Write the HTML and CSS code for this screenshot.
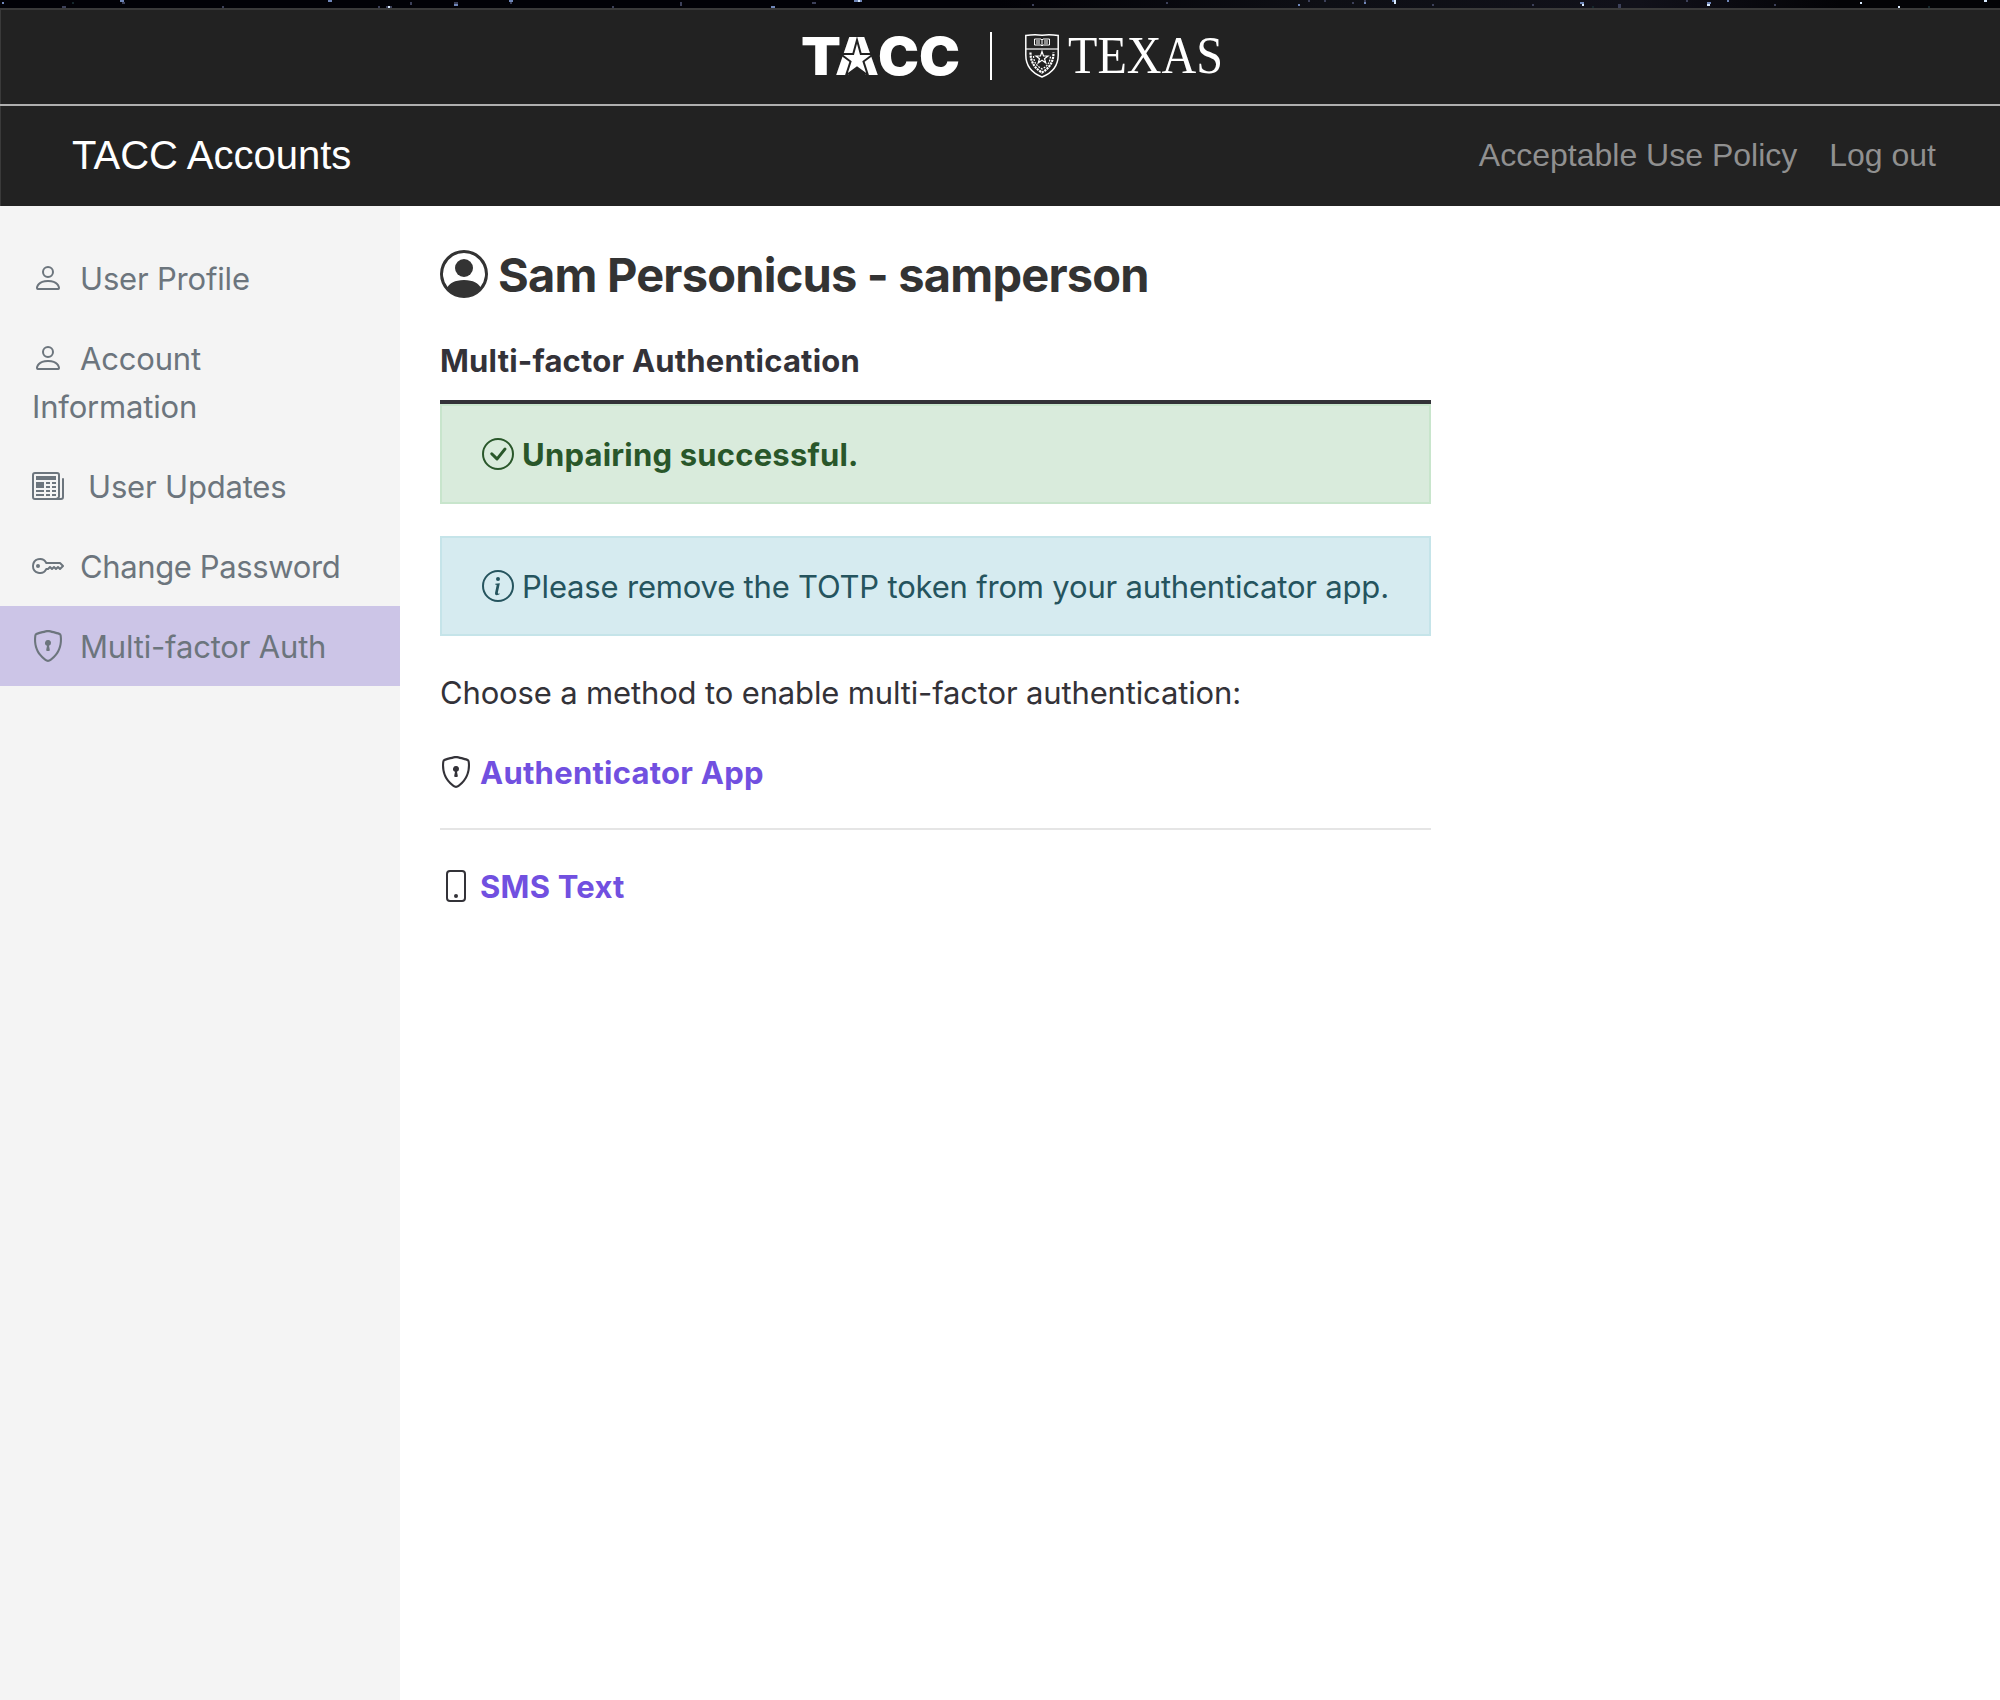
FILE: index.html
```html
<!DOCTYPE html>
<html lang="en">
<head>
<meta charset="utf-8">
<title>TACC Accounts</title>
<link rel="stylesheet" href="styles.css">
</head>
<body>
<svg width="0" height="0" class="defs" aria-hidden="true">
  <symbol id="person" viewBox="0 0 16 16"><path d="M8 8a3 3 0 1 0 0-6 3 3 0 0 0 0 6zm2-3a2 2 0 1 1-4 0 2 2 0 0 1 4 0zm4 8c0 1-1 1-1 1H3s-1 0-1-1 1-4 6-4 6 3 6 4zm-1-.004c-.001-.246-.154-.986-.832-1.664C11.516 10.68 10.289 10 8 10c-2.29 0-3.516.68-4.168 1.332-.678.678-.83 1.418-.832 1.664h10z"/></symbol>
  <symbol id="newspaper" viewBox="0 0 16 16"><path d="M0 2.5A1.5 1.5 0 0 1 1.5 1h11A1.5 1.5 0 0 1 14 2.5v10.528c0 .3-.05.654-.238.972h.738a.5.5 0 0 0 .5-.5v-9a.5.5 0 0 1 1 0v9a1.5 1.5 0 0 1-1.5 1.5H1.497A1.497 1.497 0 0 1 0 13.5v-11zM12 14c.37 0 .654-.211.853-.441.092-.106.147-.279.147-.531V2.5a.5.5 0 0 0-.5-.5h-11a.5.5 0 0 0-.5.5v11c0 .278.223.5.497.5H12z"/><path d="M2 3h10v2H2V3zm0 3h4v3H2V6zm0 4h4v1H2v-1zm0 2h4v1H2v-1zm5-6h2v1H7V6zm3 0h2v1h-2V6zM7 8h2v1H7V8zm3 0h2v1h-2V8zm-3 2h2v1H7v-1zm3 0h2v1h-2v-1zm-3 2h2v1H7v-1zm3 0h2v1h-2v-1z"/></symbol>
  <symbol id="key" viewBox="0 0 16 16"><path d="M0 8a4 4 0 0 1 7.465-2H14a.5.5 0 0 1 .354.146l1.5 1.5a.5.5 0 0 1 0 .708l-1.5 1.5a.5.5 0 0 1-.708 0L13 9.207l-.646.647a.5.5 0 0 1-.708 0L11 9.207l-.646.647a.5.5 0 0 1-.708 0L9 9.207l-.646.647A.5.5 0 0 1 8 10h-.535A4 4 0 0 1 0 8zm4-3a3 3 0 1 0 2.712 4.285A.5.5 0 0 1 7.163 9h.63l.853-.854a.5.5 0 0 1 .708 0l.646.647.646-.647a.5.5 0 0 1 .708 0l.646.647.646-.647a.5.5 0 0 1 .708 0l.646.647.793-.793-1-1h-6.63a.5.5 0 0 1-.451-.285A3 3 0 0 0 4 5z"/><path d="M4 8a1 1 0 1 1-2 0 1 1 0 0 1 2 0z"/></symbol>
  <symbol id="shield-lock" viewBox="0 0 16 16"><path d="M5.338 1.59a61.44 61.44 0 0 0-2.837.856.481.481 0 0 0-.328.39c-.554 4.157.726 7.19 2.253 9.188a10.725 10.725 0 0 0 2.287 2.233c.346.244.652.42.893.533.12.057.218.095.293.118a.55.55 0 0 0 .101.025.615.615 0 0 0 .1-.025c.076-.023.174-.061.294-.118.24-.113.547-.29.893-.533a10.726 10.726 0 0 0 2.287-2.233c1.527-1.997 2.807-5.031 2.253-9.188a.48.48 0 0 0-.328-.39c-.651-.213-1.75-.56-2.837-.855C9.552 1.29 8.531 1.067 8 1.067c-.53 0-1.552.223-2.662.524zM5.072.56C6.157.265 7.31 0 8 0s1.843.265 2.928.56c1.11.3 2.229.655 2.887.87a1.54 1.54 0 0 1 1.044 1.262c.596 4.477-.787 7.795-2.465 9.99a11.775 11.775 0 0 1-2.517 2.453 7.159 7.159 0 0 1-1.048.625c-.28.132-.581.24-.829.24s-.548-.108-.829-.24a7.158 7.158 0 0 1-1.048-.625 11.777 11.777 0 0 1-2.517-2.453C1.928 10.487.545 7.169 1.141 2.692A1.54 1.54 0 0 1 2.185 1.43 62.456 62.456 0 0 1 5.072.56z"/><path d="M9.5 6.5a1.5 1.5 0 0 1-1 1.415l.385 1.99a.5.5 0 0 1-.491.595h-.788a.5.5 0 0 1-.49-.595l.384-1.99a1.5 1.5 0 1 1 2-1.415z"/></symbol>
  <symbol id="person-circle" viewBox="0 0 16 16"><path d="M11 6a3 3 0 1 1-6 0 3 3 0 0 1 6 0z"/><path fill-rule="evenodd" d="M0 8a8 8 0 1 1 16 0A8 8 0 0 1 0 8zm8-7a7 7 0 0 0-5.468 11.37C3.242 11.226 4.805 10 8 10s4.757 1.225 5.468 2.37A7 7 0 0 0 8 1z"/></symbol>
  <symbol id="check-circle" viewBox="0 0 16 16"><path d="M8 15A7 7 0 1 1 8 1a7 7 0 0 1 0 14zm0 1A8 8 0 1 0 8 0a8 8 0 0 0 0 16z"/><path d="M10.97 4.97a.235.235 0 0 0-.02.022L7.477 9.417 5.384 7.323a.75.75 0 0 0-1.06 1.06L6.97 11.03a.75.75 0 0 0 1.079-.02l3.992-4.99a.75.75 0 0 0-1.071-1.05z"/></symbol>
  <symbol id="info-circle" viewBox="0 0 16 16"><path d="M8 15A7 7 0 1 1 8 1a7 7 0 0 1 0 14zm0 1A8 8 0 1 0 8 0a8 8 0 0 0 0 16z"/><path d="m8.93 6.588-2.29.287-.082.38.45.083c.294.07.352.176.288.469l-.738 3.468c-.194.897.105 1.319.808 1.319.545 0 1.178-.252 1.465-.598l.088-.416c-.2.176-.492.246-.686.246-.275 0-.375-.193-.304-.533L8.93 6.588zM9 4.5a1 1 0 1 1-2 0 1 1 0 0 1 2 0z"/></symbol>
  <symbol id="phone" viewBox="0 0 16 16"><path d="M11 1a1 1 0 0 1 1 1v12a1 1 0 0 1-1 1H5a1 1 0 0 1-1-1V2a1 1 0 0 1 1-1h6zM5 0a2 2 0 0 0-2 2v12a2 2 0 0 0 2 2h6a2 2 0 0 0 2-2V2a2 2 0 0 0-2-2H5z"/><path d="M8 14a1 1 0 1 0 0-2 1 1 0 0 0 0 2z"/></symbol>
</svg>

<svg class="night-sky" width="2000" height="8" viewBox="0 0 2000 8" shape-rendering="crispEdges">
  <path fill="#6f86b8" d="M2 2h2v2h-2zM120 0h4v2h-4zM328 0h4v2h-4zM454 4h4v2h-4zM509 0h4v2h-4zM771 6h4v2h-4zM854 0h8v2h-8zM1298 4h2v2h-2zM1364 2h2v2h-2zM1392 0h3v2h-3zM1580 2h4v2h-4zM1707 2h4v2h-4zM1727 0h2v2h-2z"/>
  <path fill="#3c4059" d="M62 6h4v2h-4zM122 2h3v2h-3zM222 6h2v2h-2zM378 6h2v2h-2zM386 6h6v2h-6zM410 2h2v3h-2zM454 2h4v2h-4zM510 2h2v2h-2zM612 6h2v2h-2zM680 2h2v4h-2zM812 2h4v2h-4zM1032 4h2v2h-2zM1166 2h2v2h-2zM1308 0h2v2h-2zM1324 0h2v2h-2zM1352 2h2v2h-2zM1364 0h2v2h-2zM1432 4h2v2h-2zM1532 4h2v2h-2zM1618 4h3v4h-3zM1686 0h2v2h-2zM1774 4h2v2h-2z"/>
  <path fill="#15272c" d="M72 2h2v2h-2zM1592 6h2v2h-2zM1928 6h2v2h-2z"/>
  <path fill="#d8eaff" d="M388 6h2v2h-2zM858 0h2v2h-2zM1394 0h2v4h-2zM1582 4h2v2h-2zM1707 4h3v2h-3zM1860 2h2v2h-2zM1898 6h2v2h-2zM1984 0h3v2h-3z"/>
</svg>

<header class="brand-bar">
  <a class="tacc-logo" href="#" aria-label="TACC">
    <svg width="160" height="46" viewBox="0 0 160 46">
      <g class="tacc-letters">
        <text x="0" y="41" textLength="40" lengthAdjust="spacingAndGlyphs">T</text>
        <text x="34" y="41" textLength="44" lengthAdjust="spacingAndGlyphs">A</text>
        <text x="77" y="41" textLength="41" lengthAdjust="spacingAndGlyphs">C</text>
        <text x="118" y="41" textLength="41" lengthAdjust="spacingAndGlyphs">C</text>
      </g>
      <path class="tacc-star" d="M56 6 59.800 20H72.500L62.500 27.500 67 41.500 56 33.500 45 41.500 49.500 27.500 39.500 20H52.200Z"/>
    </svg>
  </a>
  <span class="brand-rule"></span>
  <a class="texas-logo" href="#" aria-label="Texas">
    <svg width="34" height="44" viewBox="0 0 34 44" fill="none" stroke="#fff">
      <path stroke-width="1.500" d="M.8 1.500Q9 .3 17 1.200 25 .3 33.200 1.500V21C33.200 32 27 39 17 43 7 39 .8 32 .8 21Z"/>
      <path stroke-width="1.200" d="M1 15H33"/>
      <path stroke-width="1" d="M9.500 5H16L17 6 18 5H24.500V11H18L17 12 16 11H9.500ZM17 6V12M11 7H15M11 9H15M19 7H23M19 9H23"/>
      <path stroke-width="1.200" d="M17 17.500 18.500 22H23L19.500 24.700 20.800 29 17 26.300 13.200 29 14.500 24.700 11 22H15.500Z"/>
      <path stroke-width="2.200" stroke-dasharray="2.200 .8" d="M5.500 18.500Q5.500 32 17 38.500Q28.500 32 28.500 18.500"/>
      <path stroke-width="1.300" stroke-dasharray="1.800 1.200" d="M8.500 22Q9 31 17 35Q25 31 25.500 22"/>
    </svg>
    <svg width="157" height="44" viewBox="0 0 157 44"><text class="texas-word" x="1" y="38.500" textLength="155" lengthAdjust="spacingAndGlyphs">TEXAS</text></svg>
  </a>
</header>

<nav class="navbar">
  <a class="site-name" href="#">TACC Accounts</a>
  <div class="nav-links">
    <a href="#">Acceptable Use Policy</a>
    <a href="#">Log out</a>
  </div>
</nav>

<div class="layout">
  <aside class="sidebar">
    <a class="side-link" href="#"><svg class="icon"><use href="#person"/></svg><span>User Profile</span></a>
    <a class="side-link" href="#"><svg class="icon"><use href="#person"/></svg><span>Account<br>Information</span></a>
    <a class="side-link wide" href="#"><svg class="icon"><use href="#newspaper"/></svg><span>User Updates</span></a>
    <a class="side-link tight" href="#"><svg class="icon"><use href="#key"/></svg><span>Change Password</span></a>
    <a class="side-link active" href="#"><svg class="icon"><use href="#shield-lock"/></svg><span>Multi-factor Auth</span></a>
  </aside>

  <main class="content">
    <h1 class="user-title"><svg class="icon"><use href="#person-circle"/></svg><span>Sam Personicus - samperson</span></h1>
    <h2 class="section-title">Multi-factor Authentication</h2>
    <div class="alert success"><svg class="icon"><use href="#check-circle"/></svg><strong>Unpairing successful.</strong></div>
    <div class="alert info"><svg class="icon"><use href="#info-circle"/></svg><span>Please remove the TOTP token from your authenticator app.</span></div>
    <p class="prompt">Choose a method to enable multi-factor authentication:</p>
    <div class="method"><svg class="icon"><use href="#shield-lock"/></svg><a href="#">Authenticator App</a></div>
    <hr class="divider">
    <div class="method"><svg class="icon"><use href="#phone"/></svg><a href="#">SMS Text</a></div>
  </main>
</div>
</body>
</html>
```
FILE: styles.css
```css
* { box-sizing: border-box; }

body {
  margin: 0;
  height: 1700px;
  overflow: hidden;
  display: flex;
  flex-direction: column;
  background: #fff;
  color: #333238;
  font-family: Inter, "Liberation Sans", sans-serif;
  font-size: 31px;
  line-height: 48px;
}

a { color: inherit; text-decoration: none; }
.defs { position: absolute; }
.icon { width: 32px; height: 32px; fill: currentColor; flex: none; }

.night-sky { display: block; flex: none; background: linear-gradient(90deg, #020207 50%, #0e0f15 66%, #11111a 82%, #030306 92%); }

.brand-bar {
  height: 98px;
  flex: none;
  display: flex;
  align-items: flex-start;
  padding: 24px 0 0 801px;
  background: #222;
  border-top: 2px solid #3a3a3a;
  border-bottom: 2px solid #afafaf;
  box-shadow: inset 1px 0 #3a3a3a;
}
.tacc-logo { height: 46px; }
.tacc-logo svg, .texas-logo svg { display: block; overflow: visible; }
.tacc-letters { font: 900 52px Inter, sans-serif; fill: #fff; }
.tacc-star { fill: #fff; stroke: #222; stroke-width: 2px; }
.brand-rule { width: 2px; height: 48px; margin-left: 29px; margin-top: -2px; background: #fff; }
.texas-logo { display: flex; margin-left: 33px; gap: 8px; }
.texas-word { font: 53px "Liberation Serif", serif; fill: #fff; }

.navbar {
  height: 100px;
  flex: none;
  display: flex;
  justify-content: space-between;
  align-items: center;
  padding: 0 64px 2px 72px;
  background: #222;
  box-shadow: inset 1px 0 #3a3a3a;
  color: #fff;
  font-family: "Liberation Sans", Arial, sans-serif;
}
.site-name { font-size: 40px; }
.nav-links { display: flex; gap: 32px; font-size: 32px; color: #909090; }

.layout { flex: 1; display: flex; }

.sidebar { width: 400px; padding-top: 32px; background: #f4f4f4; color: #6c757d; letter-spacing: -.18px; }
.side-link { display: block; padding: 17px 32px 15px; }
.side-link .icon { margin-right: 16px; vertical-align: -4px; }
.side-link.wide .icon { margin-right: 24px; }
.side-link.tight { letter-spacing: -.38px; }
.side-link.active { background: #ccc5e7; }

.content { width: 1031px; padding: 40px 0 0 40px; }
.user-title { display: flex; align-items: center; gap: 10px; margin: 0; height: 56px; font-size: 47px; font-weight: 700; letter-spacing: -.8px; color: #333; }
.user-title span { padding-top: 2px; }
.user-title .icon { width: 48px; height: 48px; }
.section-title { margin: 34px 0 0; height: 68px; line-height: 50px; font-size: 31px; font-weight: 700; letter-spacing: .2px; border-bottom: 4px solid #333238; }
.alert { display: flex; align-items: center; gap: 8px; height: 100px; padding: 0 40px; border: 2px solid; white-space: nowrap; }
.alert span, .alert strong { padding-top: 2px; }
.success { background: #d9ebdc; border-color: #c8e5cc; color: #29572a; }
.success strong { font-weight: 700; letter-spacing: .2px; }
.info { margin-top: 32px; background: #d6ebf0; border-color: #c5e4e9; color: #25545e; letter-spacing: -.19px; }
.prompt { margin: 0; padding: 33px 0 31px; white-space: nowrap; letter-spacing: -.15px; }
.method { display: flex; align-items: center; gap: 8px; height: 48px; }
.method a { padding-top: 2px; color: #7150e0; font-weight: 700; letter-spacing: .25px; }
.divider { height: 2px; margin: 32px 0; border: 0; background: #e5e5e5; }
```
